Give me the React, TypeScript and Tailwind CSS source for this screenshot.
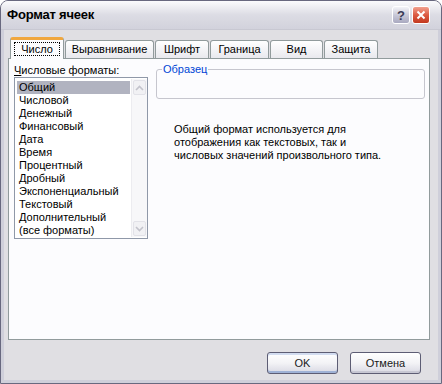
import React from "react";

const TABS = [
  { label: "Число", w: "w-[54px]" },
  { label: "Выравнивание", w: "w-[89px]" },
  { label: "Шрифт", w: "w-[54px]" },
  { label: "Граница", w: "w-[59px]" },
  { label: "Вид", w: "w-[53px]" },
  { label: "Защита", w: "w-[54px]" },
];

const FORMATS = [
  "Общий",
  "Числовой",
  "Денежный",
  "Финансовый",
  "Дата",
  "Время",
  "Процентный",
  "Дробный",
  "Экспоненциальный",
  "Текстовый",
  "Дополнительный",
  "(все форматы)",
];

function Chevron({ down }: { down?: boolean }) {
  return (
    <svg width="9" height="6" viewBox="0 0 9 6">
      <path
        d={down ? "M1 1 L4.5 4.5 L8 1" : "M1 5 L4.5 1.5 L8 5"}
        fill="none"
        stroke="#c3c3cc"
        strokeWidth="1.6"
      />
    </svg>
  );
}

function DialogButton({ children, isDefault }: { children: React.ReactNode; isDefault?: boolean }) {
  return (
    <button
      className={`w-[71px] h-[22px] rounded-[3px] border border-[#5d5d74] bg-gradient-to-b from-[#ffffff] via-[#f3f3f6] to-[#d9d9e3] text-[11px] font-normal text-[#1a1a1a] flex items-center justify-center ${
        isDefault ? "shadow-[inset_0_-2px_0_#9fb2d6,inset_0_2px_0_#d2dcf0]" : "shadow-[inset_0_-2px_0_#c7c7d3]"
      }`}
    >
      {children}
    </button>
  );
}

export default function App() {
  return (
    <div className="w-[442px] h-[384px] bg-white font-['Liberation_Sans',Arial,sans-serif] text-[11px] text-black">
      <div className="w-full h-full flex flex-col rounded-t-[8px] border border-[#68687f] bg-[#e0dfe3] overflow-hidden">
        {/* Title bar */}
        <div className="h-[29px] shrink-0 flex items-center pl-[6px] pr-[11px] bg-gradient-to-b from-[#fbfbfd] via-[#dcdce4] to-[#d2d2dc] border-b border-[#c8c8d2]">
          <span className="text-[13px] font-bold tracking-[-0.2px] text-black">Формат ячеек</span>
          <div className="ml-auto flex gap-[2px]">
            <div className="w-[18px] h-[18px] rounded-[3px] border border-white bg-gradient-to-b from-[#f4f4f8] via-[#c9c9d8] to-[#a9a9c0] flex items-center justify-center">
              <span className="text-[13px] font-bold leading-none text-[#3b3b55]">?</span>
            </div>
            <div className="w-[18px] h-[18px] rounded-[3px] border border-white bg-gradient-to-b from-[#f0a08f] via-[#dc5a42] to-[#c2381f] flex items-center justify-center">
              <svg width="10" height="10" viewBox="0 0 10 10">
                <path d="M1.5 1.5 L8.5 8.5 M8.5 1.5 L1.5 8.5" stroke="white" strokeWidth="2" />
              </svg>
            </div>
          </div>
        </div>

        {/* Body */}
        <div className="flex-1 flex flex-col border-x-[3px] border-b-[3px] border-[#cfcfda] pt-[7px] pb-[6px]">
          {/* Tabs */}
          <div className="flex items-end h-[21px] pl-[6px] relative z-10">
            {TABS.map((t, i) =>
              i === 0 ? (
                <div
                  key={t.label}
                  className={`${t.w} h-[22px] -mb-px mr-[1px] rounded-t-[3px] border-x border-[#919b9c] border-t-[3px] border-t-[#f0a73e] bg-[#fcfcfe] flex items-center justify-center pb-[2px]`}
                >
                  <span className="border border-dotted border-black px-[6px] leading-[12px]">{t.label}</span>
                </div>
              ) : (
                <div
                  key={t.label}
                  className={`${t.w} h-[18px] mr-[1px] rounded-t-[3px] border-x border-t border-[#919b9c] bg-gradient-to-b from-[#ffffff] to-[#e9e9ee] flex items-center justify-center`}
                >
                  {t.label}
                </div>
              )
            )}
          </div>

          {/* Panel */}
          <div className="ml-[4px] mr-[8px] h-[282px] border border-[#919b9c] bg-[#fcfcfe] pl-[5px] pt-[5px] flex">
            <div className="flex flex-col w-[134px]">
              <div className="h-[13px] leading-[13px]">
                <span className="underline">Ч</span>исловые форматы:
              </div>
              <div className="h-[162px] border border-[#8f98a8] bg-white flex pl-[1px] py-[1px]">
                <div className="flex-1 pt-[2px]">
                  {FORMATS.map((f, i) => (
                    <div
                      key={f}
                      className={`h-[13px] leading-[12px] pl-[2px] mx-[1px] ${i === 0 ? "bg-[#b1b3c0]" : ""}`}
                    >
                      {f}
                    </div>
                  ))}
                </div>
                <div className="w-[16px] flex flex-col justify-between bg-[#f7f7f9] border-l border-[#ececf0] px-[1px] py-[1px]">
                  <div className="h-[15px] rounded-[2px] border border-[#e2e2e8] bg-[#f1f1f4] flex items-center justify-center">
                    <Chevron />
                  </div>
                  <div className="h-[15px] rounded-[2px] border border-[#e2e2e8] bg-[#f1f1f4] flex items-center justify-center">
                    <Chevron down />
                  </div>
                </div>
              </div>
            </div>

            <div className="ml-[8px] w-[269px] flex flex-col">
              <div className="relative mt-[5px] h-[30px] rounded-[3px] border border-[#c6c6ce]">
                <span className="absolute -top-[7px] left-[5px] bg-[#fcfcfe] px-[1px] leading-[12px] text-[#0046d5]">
                  Образец
                </span>
              </div>
              <p className="mt-[24px] ml-[18px] leading-[13px]">
                Общий формат используется для
                <br />
                отображения как текстовых, так и
                <br />
                числовых значений произвольного типа.
              </p>
            </div>
          </div>

          {/* Buttons */}
          <div className="mt-auto flex justify-end gap-[12px] pr-[17px]">
            <DialogButton isDefault>OK</DialogButton>
            <DialogButton>Отмена</DialogButton>
          </div>
        </div>
      </div>
    </div>
  );
}
